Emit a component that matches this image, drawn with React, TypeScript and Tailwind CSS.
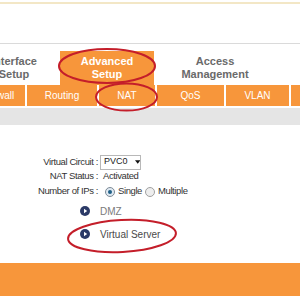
import React from "react";

function Bullet() {
  return (
    <svg width="10" height="10" viewBox="0 0 10 10" className="shrink-0">
      <circle cx="5" cy="5" r="5" fill="#2b3a67" />
      <path d="M4 2.8 L7.2 5 L4 7.2 Z" fill="#ffffff" />
    </svg>
  );
}

function Radio({ checked }: { checked?: boolean }) {
  return (
    <span
      className={
        checked
          ? "w-[10px] h-[10px] rounded-full border border-[#7d8a96] bg-[#dfe9f2] flex items-center justify-center shrink-0"
          : "w-[10px] h-[10px] rounded-full border border-[#a0a0a0] bg-[#eeeeee] flex items-center justify-center shrink-0"
      }
    >
      {checked && <span className="w-[4px] h-[4px] rounded-full bg-[#1f5f86]" />}
    </span>
  );
}

export default function App() {
  return (
    <div
      className="relative w-[300px] h-[300px] overflow-hidden bg-white"
      style={{ fontFamily: '"Liberation Sans", Arial, sans-serif' }}
    >
      <div className="mt-[2px] h-[2px] bg-[#f3e7c6]" />
      <div className="h-[39px]" />
      <div className="h-px bg-[#dadada]" />
      {/* top tabs */}
      <div className="flex items-end h-[41px]">
        <div className="ml-[-32px] w-[92px] h-[34px] flex items-center justify-center text-center text-[11px] leading-[13px] font-bold text-[#6a6a6a]">
          Interface
          <br />
          Setup
        </div>
        <div className="w-[94px] h-[34px] bg-[#f7963b] flex items-center justify-center text-center text-[11px] leading-[13px] font-bold text-white">
          Advanced
          <br />
          Setup
        </div>
        <div className="w-[122px] h-[34px] flex items-center justify-center text-center text-[11px] leading-[13px] font-bold text-[#6a6a6a]">
          Access
          <br />
          Management
        </div>
      </div>
      {/* sub tabs */}
      <div className="flex h-[21px] bg-[#f7963b] text-[10px] text-white">
        <div className="ml-[-31px] w-[56px] flex items-center justify-center">Firewall</div>
        <div className="w-[2px] bg-white" />
        <div className="w-[70px] flex items-center justify-center">Routing</div>
        <div className="w-[2px] bg-white" />
        <div className="w-[56px] flex items-center justify-center">NAT</div>
        <div className="w-[2px] bg-white" />
        <div className="w-[67px] flex items-center justify-center">QoS</div>
        <div className="w-[2px] bg-white" />
        <div className="w-[63px] flex items-center justify-center">VLAN</div>
        <div className="w-[2px] bg-white" />
      </div>
      <div className="mt-[2px] h-[17px] bg-[#e5e5e5]" />
      {/* form */}
      <div className="mt-[29px] text-[9.5px] tracking-[-0.4px] text-[#333333]">
        <div className="flex h-[16px] items-center">
          <div className="w-[98px] text-right">Virtual Circuit :</div>
          <div className="ml-[2px] w-[41px] h-[15px] border border-[#b8b8b8] bg-white flex items-center pl-[3px] text-[9px] tracking-normal text-[#222222]">
            <span>PVC0</span>
            <svg width="6" height="4" viewBox="0 0 6 4" className="ml-[7px]">
              <path d="M0 0 L6 0 L3 4 Z" fill="#111" />
            </svg>
          </div>
        </div>
        <div className="flex h-[13px] items-center">
          <div className="w-[98px] text-right">NAT Status :</div>
          <div className="ml-[5px]">Activated</div>
        </div>
        <div className="flex h-[17px] items-center">
          <div className="w-[98px] text-right">Number of IPs :</div>
          <div className="ml-[7px] flex items-center gap-[3px]">
            <Radio checked />
            <span>Single</span>
            <Radio />
            <span>Multiple</span>
          </div>
        </div>
      </div>
      {/* menu */}
      <div className="mt-[3px] pl-[80px] text-[10px]">
        <div className="flex h-[16px] items-center gap-[10px] text-[#7a7a7a]">
          <Bullet />
          <span>DMZ</span>
        </div>
        <div className="mt-[7px] flex h-[16px] items-center gap-[10px] text-[#4a4a4a]">
          <Bullet />
          <span>Virtual Server</span>
        </div>
      </div>
      <div className="mt-[21px] h-[33px] bg-[#f7963b]" />
      {/* annotation ellipses */}
      <svg
        className="absolute inset-0 pointer-events-none"
        width="300"
        height="300"
        viewBox="0 0 300 300"
      >
        <ellipse cx="107" cy="66" rx="48" ry="17" fill="none" stroke="#c41e2a" strokeWidth="2" />
        <ellipse cx="126.5" cy="97" rx="30.5" ry="13.5" fill="none" stroke="#c41e2a" strokeWidth="2" />
        <ellipse
          cx="122"
          cy="236"
          rx="54"
          ry="16"
          fill="none"
          stroke="#c41e2a"
          strokeWidth="2"
          transform="rotate(-3 122 236)"
        />
      </svg>
    </div>
  );
}
